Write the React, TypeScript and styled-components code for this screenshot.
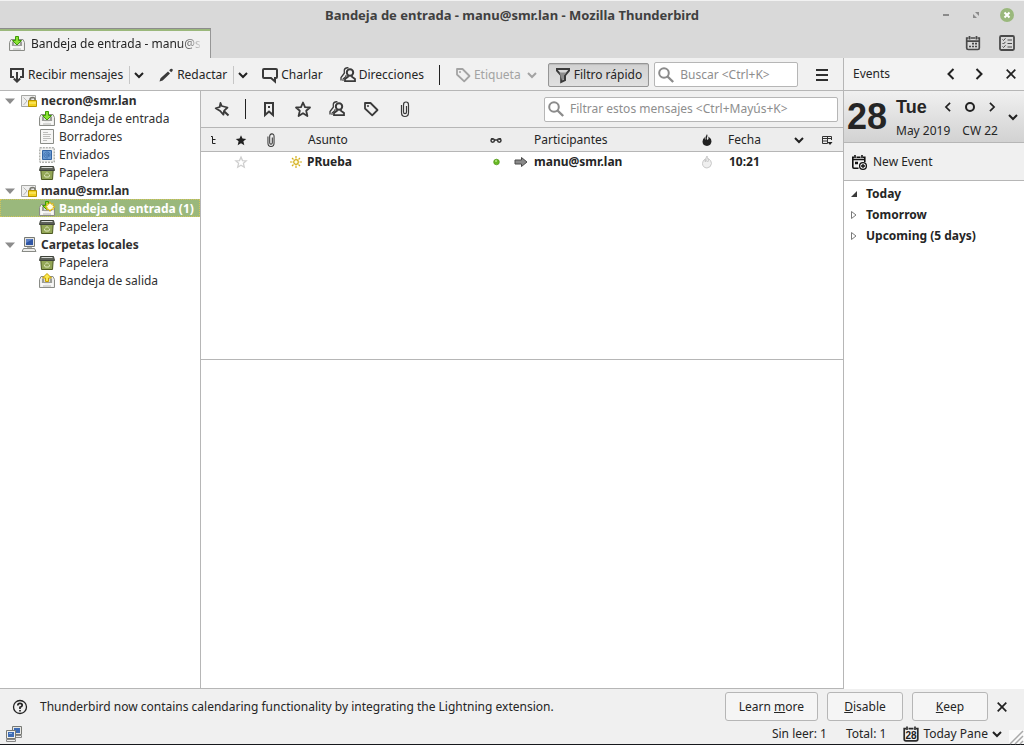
import React from "react";
import styled, { createGlobalStyle, css } from "styled-components";

const GlobalStyle = createGlobalStyle`
  *, *::before, *::after { box-sizing: border-box; }
  body {
    margin: 0;
    background: #f0f0f0;
    color: #252525;
    font: 12px/18px "Noto Sans", "Open Sans", sans-serif;
  }
  ul { list-style: none; margin: 0; padding: 0; }
`;

const LINE = "#b6b6b6";

const plainButton = css`
  appearance: none;
  border: 0;
  background: none;
  padding: 0;
  margin: 0;
  font: inherit;
  color: inherit;
  display: flex;
  flex: none;
  align-items: center;
  justify-content: center;
  white-space: nowrap;
`;

/* ---------- Icons ---------- */

const Svg = styled.svg<{ $size?: number }>`
  display: block;
  flex: none;
  width: ${(p) => p.$size ?? 16}px;
  height: ${(p) => p.$size ?? 16}px;
  overflow: visible;
`;

type IconProps = { size?: number; box?: number; children?: React.ReactNode; color?: string; width?: number };

const Line = ({ size = 16, box = 16, color = "#3a3a3a", width = 2, children }: IconProps) => (
  <Svg $size={size} viewBox={`0 0 ${box} ${box}`} fill="none" stroke={color} strokeWidth={width} aria-hidden="true">
    {children}
  </Svg>
);

const Art = ({ size = 16, box = 16, children }: IconProps) => (
  <Svg $size={size} viewBox={`0 0 ${box} ${box}`} aria-hidden="true">
    {children}
  </Svg>
);

const ChevronDown = ({ color = "#212121" }: { color?: string }) => (
  <Line size={10} box={10} color={color}><path d="M1 3l4 4 4-4" /></Line>
);
const ChevronLeft = ({ size = 12 }: { size?: number }) => (
  <Line size={size} box={12} color="#212121"><path d="M8.500 1L3.500 6l5 5" /></Line>
);
const ChevronRight = ({ size = 12 }: { size?: number }) => (
  <Line size={size} box={12} color="#212121"><path d="M3.500 1l5 5-5 5" /></Line>
);
const CloseIcon = () => (
  <Line size={10} box={10} color="#212121" width={1.7}><path d="M.7.7l8.600 8.600M9.300.7L.7 9.300" /></Line>
);
const ReceiveIcon = () => (
  <Line><path d="M5 10H2V2h12v8h-3M8 5v9" /><path d="M4.800 11.500L8 14.700l3.200-3.200" /></Line>
);
const PencilIcon = () => (
  <Art><path d="M1.500 14.500l1-3.300L10 4.500 12 6.500 4.700 13.600zM11.200 3.300l1.300-1.400q1.200-.6 1.900.2t.1 1.900L13.100 5.200z" fill="#3a3a3a" /></Art>
);
const ChatIcon = () => (
  <Line><path d="M2 2h12q1 0 1 1v7q0 1-1 1h-1v3.500L9 11H2q-1 0-1-1V3q0-1 1-1z" /></Line>
);
const PeopleIcon = () => (
  <Line>
    <circle cx="10" cy="5.500" r="3.200" />
    <path d="M8 8.500v1.200L5 12v2.200h10V12l-3-2.300V8.500" strokeWidth="1.800" />
    <path d="M8.500.8Q5 .3 4.300 3v3.200L1 10.500V13.500" strokeWidth="1.300" />
    <path d="M6 8v1.500L3 12v2" strokeWidth="1.100" />
  </Line>
);
const TagIcon = ({ color }: { color?: string }) => (
  <Line color={color}>
    <path d="M2 2h5.500l7 7-5.300 5.300L2 7.500z" strokeWidth="1.800" strokeLinejoin="round" />
    <circle cx="5" cy="5" r=".7" strokeWidth="1" />
  </Line>
);
const FunnelIcon = () => (
  <Line><path d="M2 2h12v1.600L10 8.400v4.800L6.200 15V8.400L2 3.600z" /><path d="M4.500 5.500h7L9 8.500v4l-2 1z" fill="#8c8c8c" stroke="none" /></Line>
);
const SearchIcon = () => (
  <Line color="#8b8b8b"><circle cx="6" cy="6" r="4.800" /><path d="M9.500 9.500l5.700 5.500" strokeWidth="2.400" /></Line>
);
const MenuIcon = () => (
  <Line size={14} box={14} color="#2e2e2e"><path d="M1 2h12M1 7h12M1 12h12" /></Line>
);
const PinIcon = () => (
  <Line>
    <path d="M6.500 2l1.200 3L13.500 6.500l-3.300 3.200-.8 4L6.200 10l-4.500-2.700 4-1.300z" strokeWidth="1.800" strokeLinejoin="round" />
    <path d="M9.800 10l4.700 4.500" />
  </Line>
);
const BookmarkIcon = () => (
  <Line><path d="M4 2h8v12l-4-3.500L4 14z" /><path d="M7 6h2" /></Line>
);
const STAR = "M8 1.500l2 4.600 5 .4-3.800 3.300L12.400 15 8 12.200 3.600 15l1.200-5.200L1 6.500l5-.4z";
const StarIcon = () => <Line><path d={STAR} strokeWidth="1.800" strokeLinejoin="round" /></Line>;
const StarFull = () => <Art size={12}><path d={STAR} fill="#212121" /></Art>;
const StarFaint = () => <Line size={12} color="#cfcfcf" width={1.7}><path d={STAR} /></Line>;
const ClipIcon = ({ size = 16 }: { size?: number }) => (
  <Line size={size}>
    <path d="M4.500 4v7.500q0 4 3.500 4t3.500-4V4q0-3-2.500-3T6.500 4v7q0 1.700 1.500 1.700T9.500 11V5" strokeWidth="1.200" />
  </Line>
);
const ThreadIcon = () => (
  <Line size={8} box={8} color="#212121" width={1}><path d="M1 .5h1.500v7H5.500M2.500 3.500H5.500" /></Line>
);
const GlassesIcon = () => (
  <Line size={12} box={12} color="#333" width={1.5}><circle cx="2.700" cy="6.500" r="1.700" /><circle cx="9.300" cy="6.500" r="1.700" /><path d="M4.300 6h3.400M1 5h2M9 5h2" /></Line>
);
const FlameIcon = ({ faint }: { faint?: boolean }) => (
  <Art size={12} box={12}>
    <path
      d="M6 0q1 1.500 0 3.500-.7 1.800.5 2.500Q8 5.500 7.400 2.500q3.100 2 3.100 5Q10 11.500 6 12 1.500 11.500 1.500 7.500 1.600 4.500 4 3q-.7 2 .5 3Q3.800 3 6 0z"
      fill={faint ? "#efefef" : "#212121"} stroke={faint ? "#c9c9c9" : "none"} strokeWidth="1"
    />
  </Art>
);
const ColumnsIcon = () => (
  <Line size={12} box={12} color="#333" width={1}><path d="M10.500 6V2.500h-9v7h5M1.500 4.500h9M1.500 7h5M6.500 2.500v7" /><path d="M6.500 8h5L9 11z" fill="#212121" stroke="none" /></Line>
);
const NewMailIcon = () => (
  <Line size={12} box={12} color="#d3ae18" width={1.2}>
    <circle cx="6" cy="6" r="2.300" fill="#fffde6" />
    <path d="M6 0v2.500M6 9.500v2.500M0 6h2.500M9.500 6h2.500M2 2l1.500 1.500M8.500 8.500l1.500 1.500M10 2l-1.500 1.500M3.500 8.500l-1.500 1.500" />
  </Line>
);
const UnreadDot = () => (
  <Art size={8} box={8}><circle cx="4.500" cy="4" r="2.800" fill="#69ba24" stroke="#4c9410" strokeWidth=".7" /><circle cx="4" cy="3" r="1" fill="#b3e386" /></Art>
);
const ArrowIcon = () => (
  <Art size={14} box={14}><path d="M1 5h6.500V2.500L13 7l-5.500 4.500V9H1z" fill="#8a8a8a" stroke="#4a4a4a" /></Art>
);
const Tray = () => (
  <>
    <path d="M.5 6.500L2 3.500h12l1.500 3v8H.5z" fill="#ededeb" stroke="#8a8c87" strokeLinejoin="round" />
    <path d="M3 5.500h10V10H3z" fill="#9b9d98" /><path d="M5 5h6v4H5z" fill="#d9dad7" />
    <path d="M2 10h3l1 1.500h4l1-1.500h3v3.500H2z" fill="#f8f8f7" /><path d="M4 13h8" stroke="#b5b6b3" />
  </>
);
const InboxIcon = ({ fresh }: { fresh?: boolean }) => (
  <Art>
    <Tray />
    <path d="M6.500.5h3v4h3L8 9 3.500 4.500h3z" fill="#8ae234" stroke="#3f9a06" />
    {fresh && <path d="M11 1l1.200 2.200 2-.7-.3 2.200 2.100 1-2.100 1 .3 2.200-2-.7L11 10.400 9.800 8.200l-2 .7.5-2.200-2.300-1 2.300-1-.5-2.200 2 .7z" fill="#fffce0" stroke="#e0b508" strokeWidth="1" />}
  </Art>
);
const OutboxIcon = () => (
  <Art><Tray /><path d="M6.500 8.500h3v-3.500h3L8 .5 3.500 5h3z" fill="#fce94f" stroke="#c8a000" /></Art>
);
const DraftIcon = () => (
  <Art><path d="M1.500.5h13v14h-13z" fill="#f6f6f5" stroke="#8a8c87" /><path d="M4 3.500h5M4 5.500h8M4 7.500h7M4 9.500h8M4 11.500h4" stroke="#bdbdbb" /></Art>
);
const SentIcon = () => (
  <Art>
    <path d="M.8.8h14.400v14.400H.8z" fill="#f3f3f1" stroke="#8f918c" strokeDasharray="2 1" />
    <path d="M3.500 3.500h9v9h-9z" fill="#6c9bd2" stroke="#3465a4" />
    <path d="M9.500 9.500q1.500 0 1.500-1.500a3 3 0 1 0-2 2.800M9.500 9.500V6.500" stroke="#3b6cab" fill="none" strokeWidth=".8" /><circle cx="8" cy="8" r="1.300" fill="none" stroke="#3b6cab" strokeWidth=".8" />
  </Art>
);
const TrashIcon = () => (
  <Art>
    <path d="M1.800 5h12.400l-.7 9.500h-11z" fill="#93a656" stroke="#4d5a22" />
    <path d="M1.500 1.500h13l1 4H.5z" fill="#5d6159" stroke="#3e423a" /><path d="M2.500 2.500h11" stroke="#d8dad5" />
    <path d="M6 9.500l2-2 2 2M10.800 10l-1 2H8M5.300 10l1 2H8" fill="none" stroke="#dfe8c0" />
  </Art>
);
const AccountIcon = () => (
  <Art>
    <path d="M.5 2.500h14v11H.5z" fill="#efefee" stroke="#a5a6a3" /><path d="M2.500 4.500l3.500 3.500-3.500 4M13 4l-5 4" fill="none" stroke="#b6b6b4" />
    <path d="M9 8V6.500q0-2 2.500-2t2.500 2V8" fill="none" stroke="#77776f" strokeWidth="1.500" /><path d="M7.500 7.500h8v6h-8z" fill="#f3d21d" stroke="#b69400" /><path d="M8 10h7" stroke="#fff08a" />
  </Art>
);
const ComputerIcon = () => (
  <Art>
    <path d="M3.500.5h10v9h-10z" fill="#e4e4e1" stroke="#777974" /><path d="M5 2h7v6H5z" fill="#3056a5" /><path d="M5 2h7L5 6z" fill="#5c80c6" />
    <path d="M6 10h5v2H6z" fill="#b2b3b0" /><path d="M2.500 11.500h11l1.500 3H1z" fill="#ededeb" stroke="#888a85" />
  </Art>
);
const NetworkIcon = () => (
  <Art>
    <path d="M6.500.5h9v8h-9z" fill="#e6e6e3" stroke="#777974" /><path d="M8 2h6v5H8z" fill="#3e6cb5" /><path d="M8.500 9.500h7v2h-7z" fill="#eee" stroke="#888" />
    <path d="M.5 4.500h9v8h-9z" fill="#f0f0ed" stroke="#777974" /><path d="M2 6h6v5H2z" fill="#3e6cb5" /><path d="M3 7.500h3" stroke="#94b7e4" /><path d="M.5 13.500h9v2h-9z" fill="#eee" stroke="#888" />
  </Art>
);
const CalendarTabIcon = () => (
  <Line color="#4a4a4a" width={1.7}>
    <path d="M3.500 3H1.700v10q0 1.500 1.500 1.500h9.600q1.500 0 1.500-1.500V3h-1.800M5.500 3h5M2 6.200h12" /><path d="M4.500 1v3.500M11.500 1v3.500" />
    <path d="M7 8.700h2M10 8.700h2M4 11.500h2M7 11.500h2M10 11.500h2" />
  </Line>
);
const TasksTabIcon = () => (
  <Line color="#4a4a4a" width={1.8}>
    <rect x="1" y="1" width="14" height="14" rx="1.200" />
    <path d="M3.500 4.500l1 1 2-2.200M3.500 8l1 1 2-2.200M3.500 11.500l1 1 2-2.200M8.500 5H13M8.500 8.500H13M8.500 12H13" strokeWidth="1" />
  </Line>
);
const NewEventIcon = () => (
  <Line color="#111" width={1.6}>
    <path d="M3 3.200H1.800V13q0 1.200 1.200 1.200h4.500M5.500 3.200h4M12 3.200h1.800V8M2 5.500h12" /><path d="M4 1v3M11 1v3" /><path d="M4 9h3" strokeWidth="2.500" />
    <circle cx="12" cy="12" r="3.400" fill="#f0f0f0" strokeWidth="1.300" /><path d="M12 10v4M10 12h4" strokeWidth="1.300" />
  </Line>
);
const TodayIcon = () => (
  <Art>
    <path d="M3 2.700H1.200V13q0 1.800 1.800 1.800h10q1.800 0 1.800-1.800V2.700H13M5.500 2.700h5M4 .5V4M12 .5V4" fill="none" stroke="#2b2b2b" strokeWidth="1.700" />
    <text x="8" y="12.500" textAnchor="middle" fontFamily="Liberation Sans, sans-serif" fontWeight="700" fontSize="10" fill="#212121">28</text>
  </Art>
);
const HelpIcon = () => (
  <Line size={16} color="#212121" width={1.3}>
    <circle cx="8" cy="8" r="6.500" /><path d="M5.800 6.500q0-2.200 2.200-2.200t2.200 1.900Q10.200 7.500 8 8.200V10" strokeWidth="1.700" /><path d="M8 11v1.600" strokeWidth="1.700" />
  </Line>
);
const Twisty = () => <Art size={10} box={10}><path d="M0 2.500h10L5 8z" fill="#8c8c8c" /></Art>;

/* ---------- Window frame ---------- */

const Window = styled.div`
  min-height: 100vh;
  display: flex;
  flex-direction: column;
  border-bottom: 1px solid #16181c;
`;

const TitleBar = styled.header`
  display: grid;
  grid-template-columns: 96px 1fr 96px;
  align-items: center;
  height: 28px;
  background: #d9d9d9;
  border-top: 1px solid #f2f2f2;
`;
const Title = styled.h1`
  grid-column: 2;
  margin: 0;
  text-align: center;
  font-size: 13px;
  line-height: 18px;
  color: #404040;
`;
const WindowControls = styled.div`
  display: flex;
  justify-content: flex-end;
  gap: 16px;
  padding-right: 9px;
`;
const PlainButton = styled.button<{ $w?: number; $h?: number }>`
  ${plainButton}
  width: ${(p) => p.$w ?? 16}px;
  height: ${(p) => p.$h ?? 18}px;
`;

const TabBar = styled.nav`
  display: flex;
  justify-content: space-between;
  height: 30px;
  background: #d9d9d9;
`;
const Tab = styled.button`
  ${plainButton}
  justify-content: flex-start;
  gap: 6px;
  width: 211px;
  padding: 0 10px 0 9px;
  background: #f1f1f1;
  border-top: 1px solid #8c8c8c;
  border-right: 1px solid #969696;
  box-shadow: inset 0 2px #9bb87c;
`;
const TabLabel = styled.span`
  flex: 1;
  overflow: hidden;
  text-align: left;
  mask-image: linear-gradient(to right, #000 88%, transparent 102%);
`;
const TabTools = styled.div`
  display: flex;
  align-items: center;
  gap: 18px;
  padding-right: 9px;
`;

/* ---------- Main toolbar ---------- */

const Main = styled.div`
  flex: 1;
  display: flex;
`;
const MailArea = styled.div`
  flex: 1;
  min-width: 0;
  display: flex;
  flex-direction: column;
  border-bottom: 1px solid ${LINE};
`;
const Toolbar = styled.div`
  display: flex;
  align-items: center;
  gap: 5px;
  height: 33px;
  padding: 1px 13px 0 3px;
  background: #f1f1f1;
  border-bottom: 1px solid ${LINE};
`;
const SplitButton = styled.div`
  display: flex;
  align-items: center;
`;
const ToolButton = styled.button<{ $pressed?: boolean }>`
  ${plainButton}
  gap: 3px;
  height: 24px;
  padding: 0 6px;
  &:disabled { color: #a3a3a3; }
  ${(p) =>
    p.$pressed &&
    css`
      border: 1px solid #959595;
      border-radius: 2px;
      background: linear-gradient(#d2d2d2, #e0e0e0);
      box-shadow: inset 0 1px 1px #bcbcbc;
    `}
`;
const DropButton = styled.button`
  ${plainButton}
  width: 18px;
  height: 18px;
  border-left: 1px solid #c6c6c6;
`;
const Separator = styled.span<{ $gap: number }>`
  flex: none;
  width: 1px;
  height: 20px;
  margin: 0 ${(p) => p.$gap}px;
  background: #212121;
`;
const SearchBox = styled.label<{ $w: number }>`
  display: flex;
  align-items: center;
  gap: 6px;
  flex: 0 1 ${(p) => p.$w}px;
  min-width: 0;
  height: 25px;
  padding: 0 3px;
  background: #fff;
  border: 1px solid ${LINE};
  border-radius: 2px;
`;
const SearchInput = styled.input`
  flex: 1;
  min-width: 0;
  padding: 0;
  border: 0;
  outline: 0;
  background: none;
  font: inherit;
  &::placeholder { color: #8e8e8e; opacity: 1; }
`;
const Spacer = styled.span`
  flex: 1;
`;

/* ---------- Folder pane ---------- */

const Panes = styled.div`
  flex: 1;
  display: flex;
`;
const FolderPane = styled.nav`
  flex: 0 0 201px;
  background: #fff;
  border-right: 1px solid ${LINE};
`;
const FolderRow = styled.button<{ $child?: boolean; $bold?: boolean; $selected?: boolean }>`
  ${plainButton}
  justify-content: flex-start;
  width: 100%;
  height: 18px;
  gap: 4px;
  padding-top: 2px;
  padding-left: ${(p) => (p.$child ? 39 : 5)}px;
  color: #303030;
  font-weight: ${(p) => (p.$bold || p.$selected ? 700 : 400)};
  ${(p) =>
    p.$selected &&
    css`
      color: #fff;
      background: #9ab87c;
      outline: 1px dotted #d3c55a;
      outline-offset: -1px;
    `}
`;
const TwistySlot = styled.span`
  width: 12px;
`;

type Folder = { name: string; icon: React.ReactNode; selected?: boolean };
const accounts: { name: string; icon: React.ReactNode; folders: Folder[] }[] = [
  {
    name: "necron@smr.lan",
    icon: <AccountIcon />,
    folders: [
      { name: "Bandeja de entrada", icon: <InboxIcon /> },
      { name: "Borradores", icon: <DraftIcon /> },
      { name: "Enviados", icon: <SentIcon /> },
      { name: "Papelera", icon: <TrashIcon /> },
    ],
  },
  {
    name: "manu@smr.lan",
    icon: <AccountIcon />,
    folders: [
      { name: "Bandeja de entrada (1)", icon: <InboxIcon fresh />, selected: true },
      { name: "Papelera", icon: <TrashIcon /> },
    ],
  },
  {
    name: "Carpetas locales",
    icon: <ComputerIcon />,
    folders: [
      { name: "Papelera", icon: <TrashIcon /> },
      { name: "Bandeja de salida", icon: <OutboxIcon /> },
    ],
  },
];

/* ---------- Message list ---------- */

const MessagePane = styled.main`
  flex: 1;
  min-width: 0;
  display: flex;
  flex-direction: column;
  background: #fff;
`;
const ListArea = styled.section`
  flex: 0 0 45%;
  border-bottom: 1px solid ${LINE};
`;
const FilterBar = styled.div`
  display: flex;
  align-items: center;
  gap: 18px;
  height: 37px;
  padding: 0 5px 0 13px;
  background: #f0f0f0;
  border-bottom: 1px solid ${LINE};
`;
const MessageTable = styled.table`
  width: 100%;
  table-layout: fixed;
  border-collapse: separate;
  border-spacing: 0;
  text-align: left;
`;
const HeadCell = styled.th<{ $pad?: number }>`
  height: 24px;
  padding: 0 0 0 ${(p) => p.$pad ?? 0}px;
  font-weight: 400;
  background: #ededed;
  border-bottom: 1px solid ${LINE};
`;
const Cell = styled.td<{ $pad?: number }>`
  height: 20px;
  padding: 0 0 0 ${(p) => p.$pad ?? 0}px;
  font-weight: 700;
`;
const CellRow = styled.div<{ $gap?: number; $center?: boolean; $between?: boolean }>`
  display: flex;
  align-items: center;
  gap: ${(p) => p.$gap ?? 0}px;
  justify-content: ${(p) => (p.$center ? "center" : p.$between ? "space-between" : "flex-start")};
`;

/* ---------- Today pane ---------- */

const TodayPane = styled.aside`
  flex: 0 0 181px;
  background: #fff;
  border-left: 1px solid ${LINE};
`;
const PaneHeader = styled.div`
  display: flex;
  align-items: center;
  gap: 12px;
  height: 33px;
  padding: 0 1px 0 9px;
  background: #f3f3f3;
  border-bottom: 1px solid ${LINE};
`;
const PaneTitle = styled.h2`
  flex: 1;
  margin: 0;
  font-size: 12px;
  line-height: 18px;
  font-weight: 400;
`;
const DateCard = styled.div`
  display: flex;
  align-items: center;
  height: 52px;
  padding: 0 0 0 3px;
  background: linear-gradient(#f0f0f0, #d2d2d2);
  border-bottom: 1px solid ${LINE};
`;
const DayNumber = styled.div`
  width: 49px;
  font: 700 36px/48px "Liberation Sans", sans-serif;
`;
const DateDetails = styled.div`
  flex: 1;
`;
const WeekdayRow = styled.div`
  display: flex;
  align-items: center;
  gap: 7px;
  height: 28px;
`;
const Weekday = styled.span`
  width: 38px;
  font: 700 18px/28px "Liberation Sans", sans-serif;
`;
const MonthRow = styled.div`
  display: flex;
  gap: 12px;
  line-height: 20px;
  white-space: nowrap;
`;
const NewEventBar = styled.div`
  display: flex;
  align-items: center;
  height: 38px;
  padding-left: 7px;
  background: #f0f0f0;
  border-bottom: 1px solid ${LINE};
`;
const NewEventButton = styled.button`
  ${plainButton}
  gap: 6px;
`;
const Agenda = styled.ul`
  && { padding: 2px 0 0 5px; }
`;
const AgendaItem = styled.button`
  ${plainButton}
  gap: 7px;
  height: 21px;
  font-weight: 700;
`;

/* ---------- Bottom bars ---------- */

const Notification = styled.div`
  display: flex;
  align-items: center;
  gap: 9px;
  height: 35px;
  padding: 0 17px 0 12px;
`;
const NotificationText = styled.p`
  flex: 1;
  margin: 0 0 0 3px;
`;
const ActionButton = styled.button`
  ${plainButton}
  height: 29px;
  padding: 0 13px;
  min-width: 76px;
  background: #f5f5f5;
  border: 1px solid ${LINE};
  border-radius: 3px;
`;
const StatusBar = styled.footer`
  display: flex;
  align-items: center;
  height: 20px;
  padding: 0 0 0 6px;
`;
const Counts = styled.div`
  display: flex;
  gap: 19px;
  margin-right: 17px;
`;
const TodayToggle = styled.button`
  ${plainButton}
  gap: 4px;
`;
const Grip = styled.div`
  width: 15px;
  height: 14px;
  margin-left: 7px;
  align-self: flex-end;
  background: #fafafa;
`;

export default function App() {
  return (
    <>
      <GlobalStyle />
      <Window>
        <TitleBar>
          <Title>Bandeja de entrada - manu@smr.lan - Mozilla Thunderbird</Title>
          <WindowControls>
            <PlainButton aria-label="Minimizar" $w={14}>
              <Line size={14} box={14} color="#8a8a8a"><path d="M4 7h6" /></Line>
            </PlainButton>
            <PlainButton aria-label="Maximizar" $w={14}>
              <Art size={14} box={14}><path d="M6 4h4v4zM4 6l4 4H4z" fill="#8a8a8a" /></Art>
            </PlainButton>
            <PlainButton aria-label="Cerrar" $w={16}>
              <Art><circle cx="8" cy="8" r="7" fill="#9ab87c" /><path d="M5.500 5.500l5 5M10.500 5.500l-5 5" stroke="#fff" strokeWidth="2" /></Art>
            </PlainButton>
          </WindowControls>
        </TitleBar>
        <TabBar>
          <Tab>
            <InboxIcon />
            <TabLabel>Bandeja de entrada - manu@smr.lan</TabLabel>
          </Tab>
          <TabTools>
            <PlainButton aria-label="Calendario"><CalendarTabIcon /></PlainButton>
            <PlainButton aria-label="Tareas"><TasksTabIcon /></PlainButton>
          </TabTools>
        </TabBar>

        <Main>
          <MailArea>
            <Toolbar>
              <SplitButton>
                <ToolButton><ReceiveIcon />Recibir mensajes</ToolButton>
                <DropButton aria-label="Opciones de recepción"><ChevronDown /></DropButton>
              </SplitButton>
              <SplitButton>
                <ToolButton><PencilIcon />Redactar</ToolButton>
                <DropButton aria-label="Opciones de redacción"><ChevronDown /></DropButton>
              </SplitButton>
              <ToolButton><ChatIcon />Charlar</ToolButton>
              <ToolButton><PeopleIcon />Direcciones</ToolButton>
              <Separator $gap={4} />
              <ToolButton disabled>
                <TagIcon color="#a3a3a3" />Etiqueta&nbsp;<ChevronDown color="#a3a3a3" />
              </ToolButton>
              <ToolButton $pressed aria-pressed="true"><FunnelIcon />Filtro rápido</ToolButton>
              <SearchBox $w={144}>
                <SearchIcon />
                <SearchInput aria-label="Buscar" placeholder="Buscar <Ctrl+K>" />
              </SearchBox>
              <Spacer />
              <PlainButton aria-label="Menú"><MenuIcon /></PlainButton>
            </Toolbar>

            <Panes>
              <FolderPane aria-label="Carpetas">
                <ul>
                  {accounts.map((account) => (
                    <li key={account.name}>
                      <FolderRow $bold>
                        <TwistySlot><Twisty /></TwistySlot>
                        {account.icon}
                        {account.name}
                      </FolderRow>
                      <ul>
                        {account.folders.map((folder) => (
                          <li key={folder.name}>
                            <FolderRow $child $selected={folder.selected}>
                              {folder.icon}
                              {folder.name}
                            </FolderRow>
                          </li>
                        ))}
                      </ul>
                    </li>
                  ))}
                </ul>
              </FolderPane>

              <MessagePane>
                <ListArea>
                  <FilterBar>
                    <PlainButton aria-label="Mantener filtros"><PinIcon /></PlainButton>
                    <Separator $gap={-3} />
                    <PlainButton aria-label="No leídos"><BookmarkIcon /></PlainButton>
                    <PlainButton aria-label="Destacados"><StarIcon /></PlainButton>
                    <PlainButton aria-label="Contactos"><PeopleIcon /></PlainButton>
                    <PlainButton aria-label="Etiquetas"><TagIcon /></PlainButton>
                    <PlainButton aria-label="Adjuntos"><ClipIcon /></PlainButton>
                    <Spacer />
                    <SearchBox $w={294}>
                      <SearchIcon />
                      <SearchInput aria-label="Filtrar estos mensajes" placeholder="Filtrar estos mensajes <Ctrl+Mayús+K>" />
                    </SearchBox>
                  </FilterBar>
                  <MessageTable>
                    <colgroup>
                      <col width="25" />
                      <col width="30" />
                      <col width="30" />
                      <col />
                      <col width="26" />
                      <col width="183" />
                      <col width="30" />
                      <col width="89" />
                      <col width="32" />
                    </colgroup>
                    <thead>
                      <tr>
                        <HeadCell aria-label="Conversación"><CellRow $center><ThreadIcon /></CellRow></HeadCell>
                        <HeadCell aria-label="Destacado"><CellRow $center><StarFull /></CellRow></HeadCell>
                        <HeadCell aria-label="Adjunto"><CellRow $center><ClipIcon size={14} /></CellRow></HeadCell>
                        <HeadCell $pad={22}>Asunto</HeadCell>
                        <HeadCell aria-label="Leído"><CellRow $center><GlassesIcon /></CellRow></HeadCell>
                        <HeadCell $pad={25}>Participantes</HeadCell>
                        <HeadCell aria-label="Basura"><CellRow $center><FlameIcon /></CellRow></HeadCell>
                        <HeadCell $pad={6}>
                          <CellRow $between>
                            Fecha
                            <PlainButton aria-label="Orden descendente" $w={24}><ChevronDown /></PlainButton>
                          </CellRow>
                        </HeadCell>
                        <HeadCell>
                          <CellRow $center>
                            <PlainButton aria-label="Elegir columnas"><ColumnsIcon /></PlainButton>
                          </CellRow>
                        </HeadCell>
                      </tr>
                    </thead>
                    <tbody>
                      <tr>
                        <Cell />
                        <Cell><CellRow $center><StarFaint /></CellRow></Cell>
                        <Cell />
                        <Cell $pad={4}><CellRow $gap={5}><NewMailIcon />PRueba</CellRow></Cell>
                        <Cell><CellRow $center><UnreadDot /></CellRow></Cell>
                        <Cell $pad={5}><CellRow $gap={6}><ArrowIcon />manu@smr.lan</CellRow></Cell>
                        <Cell><CellRow $center><FlameIcon faint /></CellRow></Cell>
                        <Cell $pad={7}>10:21</Cell>
                        <Cell />
                      </tr>
                    </tbody>
                  </MessageTable>
                </ListArea>
              </MessagePane>
            </Panes>
          </MailArea>

          <TodayPane>
            <PaneHeader>
              <PaneTitle>Events</PaneTitle>
              <PlainButton aria-label="Anterior"><ChevronLeft /></PlainButton>
              <PlainButton aria-label="Siguiente"><ChevronRight /></PlainButton>
              <PlainButton aria-label="Cerrar panel" $w={24}><CloseIcon /></PlainButton>
            </PaneHeader>
            <DateCard>
              <DayNumber>28</DayNumber>
              <DateDetails>
                <WeekdayRow>
                  <Weekday>Tue</Weekday>
                  <PlainButton aria-label="Día anterior" $w={14}><ChevronLeft size={10} /></PlainButton>
                  <PlainButton aria-label="Hoy">
                    <Line size={12} box={12} color="#212121"><circle cx="6" cy="6" r="4" /></Line>
                  </PlainButton>
                  <PlainButton aria-label="Día siguiente" $w={14}><ChevronRight size={10} /></PlainButton>
                </WeekdayRow>
                <MonthRow><span>May 2019</span><span>CW 22</span></MonthRow>
              </DateDetails>
              <PlainButton aria-label="Mostrar minicalendario" $w={22}><ChevronDown /></PlainButton>
            </DateCard>
            <NewEventBar>
              <NewEventButton><NewEventIcon />New Event</NewEventButton>
            </NewEventBar>
            <Agenda>
              <li><AgendaItem><Art size={10} box={10}><path d="M8 2v6H2z" fill="#3a3a3a" /></Art>Today</AgendaItem></li>
              {["Tomorrow", "Upcoming (5 days)"].map((label) => (
                <li key={label}>
                  <AgendaItem>
                    <Line size={10} box={10} color="#7a7a7a" width={1}><path d="M2.500 1.500v7L7 5z" /></Line>
                    {label}
                  </AgendaItem>
                </li>
              ))}
            </Agenda>
          </TodayPane>
        </Main>

        <Notification role="status">
          <HelpIcon />
          <NotificationText>
            Thunderbird now contains calendaring functionality by integrating the Lightning extension.
          </NotificationText>
          <ActionButton><span>Learn <u>m</u>ore</span></ActionButton>
          <ActionButton><span><u>D</u>isable</span></ActionButton>
          <ActionButton><span><u>K</u>eep</span></ActionButton>
          <PlainButton aria-label="Cerrar aviso" $w={10}><CloseIcon /></PlainButton>
        </Notification>
        <StatusBar>
          <NetworkIcon />
          <Spacer />
          <Counts><span>Sin leer: 1</span><span>Total: 1</span></Counts>
          <TodayToggle><TodayIcon />Today Pane<ChevronDown /></TodayToggle>
          <Grip>
            <Line size={14} box={14} color="#a9a9a9" width={1.5}><path d="M1 14L14 1M6 14l8-8M11 14l3-3" /></Line>
          </Grip>
        </StatusBar>
      </Window>
    </>
  );
}
